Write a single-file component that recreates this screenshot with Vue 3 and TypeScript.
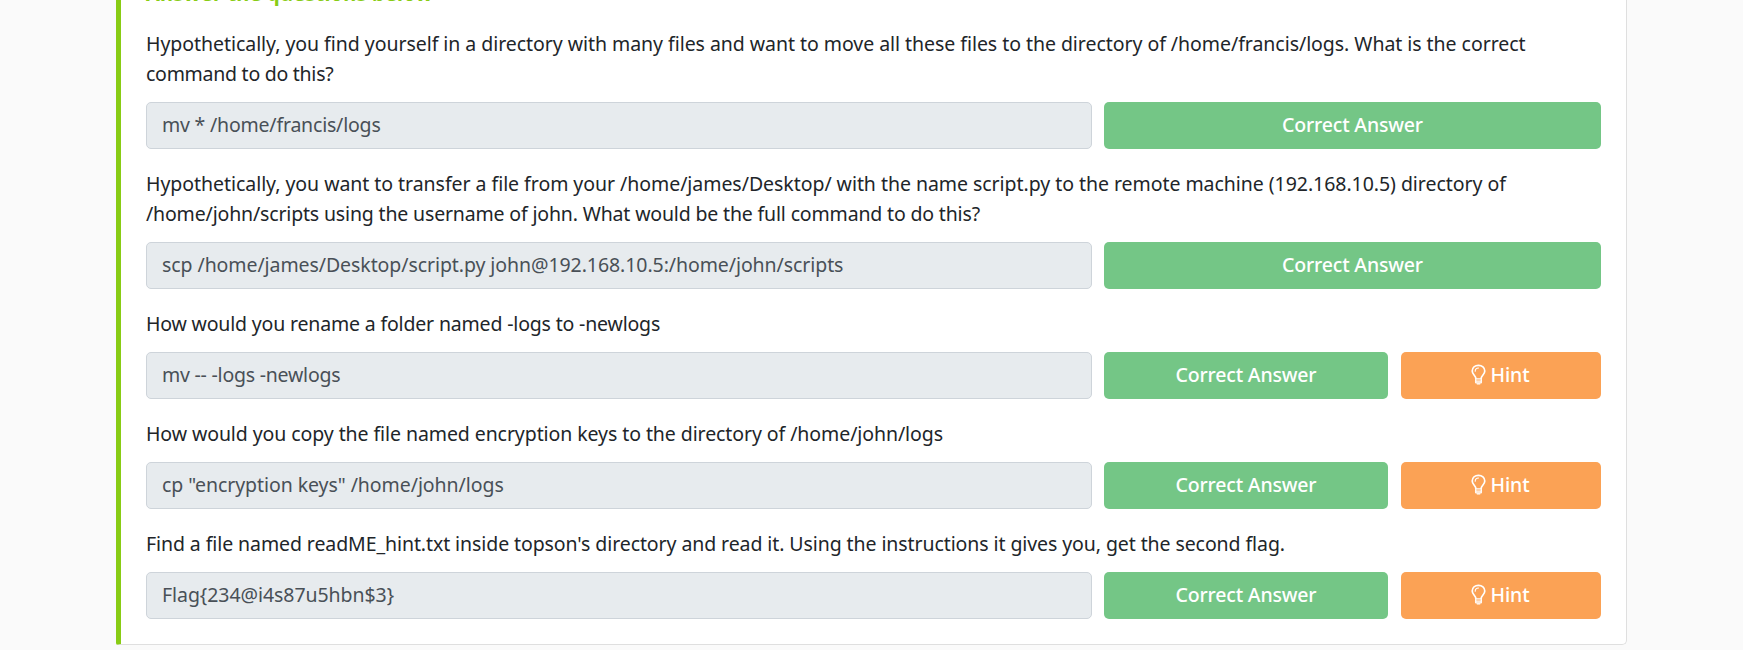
<script setup lang="ts">
interface Line {
  text: string
  tracking: number
}

interface Question {
  lines: Line[]
  answer: Line
  hint: boolean
}

const questions: Question[] = [
  {
    lines: [
      {
        text: 'Hypothetically, you find yourself in a directory with many files and want to move all these files to the directory of /home/francis/logs. What is the correct',
        tracking: -0.046,
      },
      { text: 'command to do this?', tracking: -0.26 },
    ],
    answer: { text: 'mv * /home/francis/logs', tracking: -0.2 },
    hint: false,
  },
  {
    lines: [
      {
        text: 'Hypothetically, you want to transfer a file from your /home/james/Desktop/ with the name script.py to the remote machine (192.168.10.5) directory of',
        tracking: -0.045,
      },
      {
        text: '/home/john/scripts using the username of john. What would be the full command to do this?',
        tracking: -0.16,
      },
    ],
    answer: {
      text: 'scp /home/james/Desktop/script.py john@192.168.10.5:/home/john/scripts',
      tracking: -0.074,
    },
    hint: false,
  },
  {
    lines: [{ text: 'How would you rename a folder named -logs to -newlogs', tracking: -0.17 }],
    answer: { text: 'mv -- -logs -newlogs', tracking: -0.22 },
    hint: true,
  },
  {
    lines: [
      {
        text: 'How would you copy the file named encryption keys to the directory of /home/john/logs',
        tracking: -0.08,
      },
    ],
    answer: { text: 'cp "encryption keys" /home/john/logs', tracking: -0.06 },
    hint: true,
  },
  {
    lines: [
      {
        text: "Find a file named readME_hint.txt inside topson's directory and read it. Using the instructions it gives you, get the second flag.",
        tracking: -0.086,
      },
    ],
    answer: { text: 'Flag{234@i4s87u5hbn$3}', tracking: -0.06 },
    hint: true,
  },
]

const spacing = (line: Line) => ({ letterSpacing: `${line.tracking}px` })
</script>

<template>
  <main class="page">
    <section class="card">
      <h5 class="heading">Answer the questions below</h5>
      <div v-for="(q, i) in questions" :key="i" class="question">
        <p class="prompt">
          <span v-for="line in q.lines" :key="line.text" class="line" :style="spacing(line)">{{ line.text }}</span>
        </p>
        <div class="row">
          <input class="answer" type="text" readonly :value="q.answer.text" :style="spacing(q.answer)" />
          <button class="btn correct" type="button">Correct Answer</button>
          <button v-if="q.hint" class="btn hint" type="button">
            <svg class="bulb" viewBox="0 0 16 22" fill="none" stroke="currentColor">
              <path
                d="M5.2 15.2C5.1 12.2 1.3 11.2 1.3 7.3C1.3 3.6 4.3 1.2 8 1.2s6.7 2.4 6.7 6.1c0 3.9-3.8 4.9-3.9 7.9"
                stroke-width="1.8"
              />
              <path d="M4.5 7.4C4.5 5.4 6 4.1 8 4.1" stroke-width="1.2" stroke-linecap="round" />
              <path d="M4.8 15.6h6.4M4.8 18h6.4M5.4 20h5.2M5 15v4.4M11 15v4.4" stroke-width="1.4" stroke-linecap="round" />
              <path d="M6.8 21h2.4" stroke-width="1.5" stroke-linecap="round" />
            </svg>
            <span>Hint</span>
          </button>
        </div>
      </div>
    </section>
  </main>
</template>

<style>
body {
  margin: 0;
  background: #fafafa;
  overflow: hidden;
}
</style>

<style scoped>
.page {
  box-sizing: border-box;
  height: 650px;
  padding-left: 116px;
  overflow: hidden;
  font-family: 'Noto Sans', 'Open Sans', sans-serif;
  font-size: 19.5px;
  color: #212529;
}

.card {
  box-sizing: border-box;
  width: 1511px;
  height: 665px;
  margin-top: -20px;
  padding: 0 25px;
  background: #fff;
  border: 1px solid #dfdfdf;
  border-top: 0;
  border-left: 5px solid #88cc14;
  border-radius: 0 0 5px 2px;
}

.heading {
  height: 30px;
  margin: 0 0 19px;
  font-size: 20px;
  font-weight: 700;
  line-height: 28px;
  letter-spacing: 0.2px;
  white-space: nowrap;
  color: #88cc14;
}

.question {
  margin-bottom: 20px;
}

.prompt {
  margin: 0 0 13px;
  line-height: 30px;
}

.line {
  display: block;
  white-space: nowrap;
}

.row {
  display: flex;
  height: 47px;
}

.answer {
  box-sizing: border-box;
  width: 946px;
  height: 47px;
  margin: 0 12px 0 0;
  padding: 0 15px 2px;
  border: 1px solid #ced4da;
  border-radius: 5px;
  background: #e7ebee;
  color: #495057;
  font: inherit;
  outline: none;
}

.btn {
  display: flex;
  align-items: center;
  justify-content: center;
  padding: 0 0 2px;
  border: 0;
  border-radius: 5px;
  color: #fff;
  font: inherit;
  font-weight: 500;
  white-space: nowrap;
}

.correct {
  flex: 1;
  background: #74c686;
  letter-spacing: -0.18px;
}

.hint {
  width: 200px;
  margin-left: 13px;
  padding-right: 1px;
  gap: 4px;
  background: #fba255;
  letter-spacing: -0.1px;
}

.bulb {
  width: 15px;
  height: 21px;
}
</style>
